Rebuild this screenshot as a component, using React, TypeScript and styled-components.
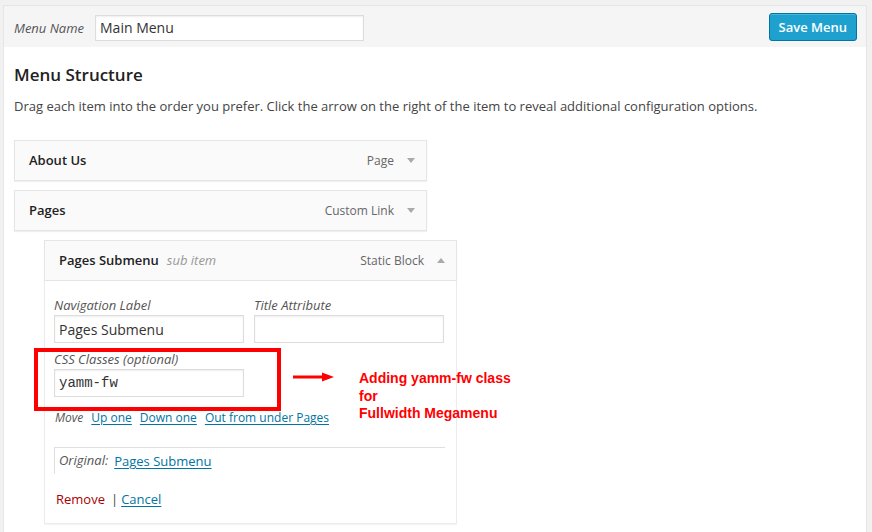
import React from "react";
import styled, { createGlobalStyle } from "styled-components";

const GlobalStyle = createGlobalStyle`
  html, body { margin: 0; padding: 0; background: #f1f1f1; }
  body { font-family: "Open Sans", "Noto Sans", sans-serif; font-size: 13px; color: #444; }
  * { box-sizing: border-box; }
`;

const Page = styled.div`
  padding: 5px 5px 0 3px;
`;

const Frame = styled.div`
  border: 1px solid #e5e5e5;
  border-bottom: none;
  background: #fff;
`;

const Header = styled.div`
  display: flex;
  align-items: center;
  justify-content: space-between;
  height: 41px;
  padding: 0 9px 0 10px;
  background: #f5f5f5;
`;

const NameGroup = styled.label`
  display: flex;
  align-items: center;
  gap: 11px;
  margin-top: 2px;
`;

const FieldLabel = styled.span<{ $size?: number }>`
  font-style: italic;
  font-size: ${(p) => p.$size ?? 13}px;
  line-height: 18px;
  color: #555;
`;

const TextInput = styled.input<{ $w: number; $h?: number; $mono?: boolean }>`
  display: block;
  width: ${(p) => p.$w}px;
  height: ${(p) => p.$h ?? 28}px;
  margin: 0;
  padding: 0 4px;
  border: 1px solid #ddd;
  background: #fff;
  box-shadow: inset 0 1px 2px rgba(0, 0, 0, 0.07);
  font-family: ${(p) => (p.$mono ? '"Liberation Mono", "DejaVu Sans Mono", monospace' : '"Open Sans", sans-serif')};
  font-size: 14px;
  color: #333;
  outline: none;
`;

const PrimaryButton = styled.button`
  height: 28px;
  padding: 0 9px 1px;
  border: 1px solid #0074a2;
  border-radius: 3px;
  background: #1ea1cf;
  box-shadow: inset 0 1px 0 rgba(120, 200, 230, 0.5);
  color: #fff;
  font-family: "Open Sans", sans-serif;
  font-size: 13px;
  font-weight: 600;
  line-height: 26px;
  cursor: pointer;
`;

const Body = styled.div`
  padding: 16px 10px 24px;
`;

const Heading = styled.h3`
  margin: 0;
  font-size: 17px;
  line-height: 24px;
  font-weight: 600;
  color: #222;
`;

const Description = styled.p`
  margin: 9px 0 24px;
  font-size: 13px;
  line-height: 20px;
  color: #444;
`;

const MenuList = styled.div`
  display: flex;
  flex-direction: column;
  gap: 9px;
`;

const Item = styled.div<{ $depth: number }>`
  margin-left: ${(p) => p.$depth * 30}px;
  width: 413px;
`;

const Handle = styled.div`
  display: flex;
  align-items: center;
  height: 41px;
  padding: 0 11px 1px 14px;
  background: #fafafa;
  border: 1px solid #e5e5e5;
  box-shadow: 0 1px 1px rgba(0, 0, 0, 0.06);
`;

const ItemTitle = styled.span`
  font-size: 13px;
  font-weight: 600;
  color: #222;
`;

const SubNote = styled.span`
  margin-left: 8px;
  font-style: italic;
  color: #999;
`;

const ItemType = styled.span`
  margin-left: auto;
  margin-right: 13px;
  font-size: 12px;
  color: #666;
`;

const Settings = styled.div`
  padding: 15px 11px 14px 9px;
  border: 1px solid #ececec;
  border-top: none;
  background: #fff;
  box-shadow: 0 1px 1px rgba(0, 0, 0, 0.04);
`;

const FieldRow = styled.div`
  display: grid;
  grid-template-columns: 190px 190px;
  column-gap: 10px;
`;

const Field = styled.div`
  display: flex;
  flex-direction: column;
  gap: 1px;
  position: relative;
  width: 190px;
`;

const CssField = styled(Field)`
  margin-top: 7px;
`;

const Highlight = styled.div`
  position: absolute;
  left: -20px;
  top: -2px;
  width: 247px;
  height: 63px;
  border: 4px solid #f00;
  pointer-events: none;
`;

const ArrowMark = styled.svg`
  position: absolute;
  left: 239px;
  top: 22px;
`;

const Note = styled.div`
  position: absolute;
  left: 305px;
  top: 20px;
  width: 220px;
  font-family: "Liberation Sans", Arial, sans-serif;
  font-weight: bold;
  font-size: 14px;
  line-height: 17.5px;
  color: #f00;
`;

const MoveRow = styled.div`
  display: flex;
  align-items: center;
  gap: 8px;
  margin-top: 12px;
  padding-left: 1px;
  line-height: 18px;
  font-size: 12px;
`;

const Link = styled.a`
  color: #0074a2;
  text-decoration: underline;
  text-underline-offset: 2px;
  cursor: pointer;
`;

const Original = styled.div`
  margin-top: 20px;
  padding: 3px 4px;
  border-top: 1px solid #dfdfdf;
  border-left: 1px solid #dfdfdf;
  line-height: 20px;
  display: flex;
  gap: 6px;
`;

const Actions = styled.div`
  margin-top: 15px;
  padding-left: 2px;
  line-height: 20px;
  color: #444;
`;

const RemoveLink = styled.a`
  color: #a00;
  margin-right: 6px;
`;

const Sep = styled.span`
  margin-right: 3px;
`;

const Chevron = ({ up }: { up?: boolean }) => (
  <svg width="8" height="5" viewBox="0 0 8 5">
    <polygon points={up ? "0,5 8,5 4,0" : "0,0 8,0 4,5"} fill="#aaa" />
  </svg>
);

export default function App() {
  return (
    <>
      <GlobalStyle />
      <Page>
        <Frame>
          <Header>
            <NameGroup>
              <FieldLabel>Menu Name</FieldLabel>
              <TextInput $w={269} $h={26} defaultValue="Main Menu" />
            </NameGroup>
            <PrimaryButton>Save Menu</PrimaryButton>
          </Header>
          <Body>
            <Heading>Menu Structure</Heading>
            <Description>
              Drag each item into the order you prefer. Click the arrow on the right of the item to reveal additional configuration options.
            </Description>
            <MenuList>
              <Item $depth={0}>
                <Handle>
                  <ItemTitle>About Us</ItemTitle>
                  <ItemType>Page</ItemType>
                  <Chevron />
                </Handle>
              </Item>
              <Item $depth={0}>
                <Handle>
                  <ItemTitle>Pages</ItemTitle>
                  <ItemType>Custom Link</ItemType>
                  <Chevron />
                </Handle>
              </Item>
              <Item $depth={1}>
                <Handle>
                  <ItemTitle>Pages Submenu</ItemTitle>
                  <SubNote>sub item</SubNote>
                  <ItemType>Static Block</ItemType>
                  <Chevron up />
                </Handle>
                <Settings>
                  <FieldRow>
                    <Field>
                      <FieldLabel>Navigation Label</FieldLabel>
                      <TextInput $w={190} defaultValue="Pages Submenu" />
                    </Field>
                    <Field>
                      <FieldLabel>Title Attribute</FieldLabel>
                      <TextInput $w={190} defaultValue="" />
                    </Field>
                  </FieldRow>
                  <CssField>
                    <FieldLabel>CSS Classes (optional)</FieldLabel>
                    <TextInput $w={190} $mono defaultValue="yamm-fw" />
                    <Highlight />
                    <ArrowMark width="41" height="10" viewBox="0 0 41 10">
                      <rect x="0" y="3.5" width="30" height="3" fill="#f00" />
                      <polygon points="29,0.5 41,5 29,9.5" fill="#f00" />
                    </ArrowMark>
                    <Note>
                      Adding yamm-fw class
                      <br />
                      for
                      <br />
                      Fullwidth Megamenu
                    </Note>
                  </CssField>
                  <MoveRow>
                    <FieldLabel $size={12}>Move</FieldLabel>
                    <Link>Up one</Link>
                    <Link>Down one</Link>
                    <Link>Out from under Pages</Link>
                  </MoveRow>
                  <Original>
                    <FieldLabel>Original:</FieldLabel>
                    <Link>Pages Submenu</Link>
                  </Original>
                  <Actions>
                    <RemoveLink>Remove</RemoveLink>
                    <Sep>|</Sep>
                    <Link>Cancel</Link>
                  </Actions>
                </Settings>
              </Item>
            </MenuList>
          </Body>
        </Frame>
      </Page>
    </>
  );
}
